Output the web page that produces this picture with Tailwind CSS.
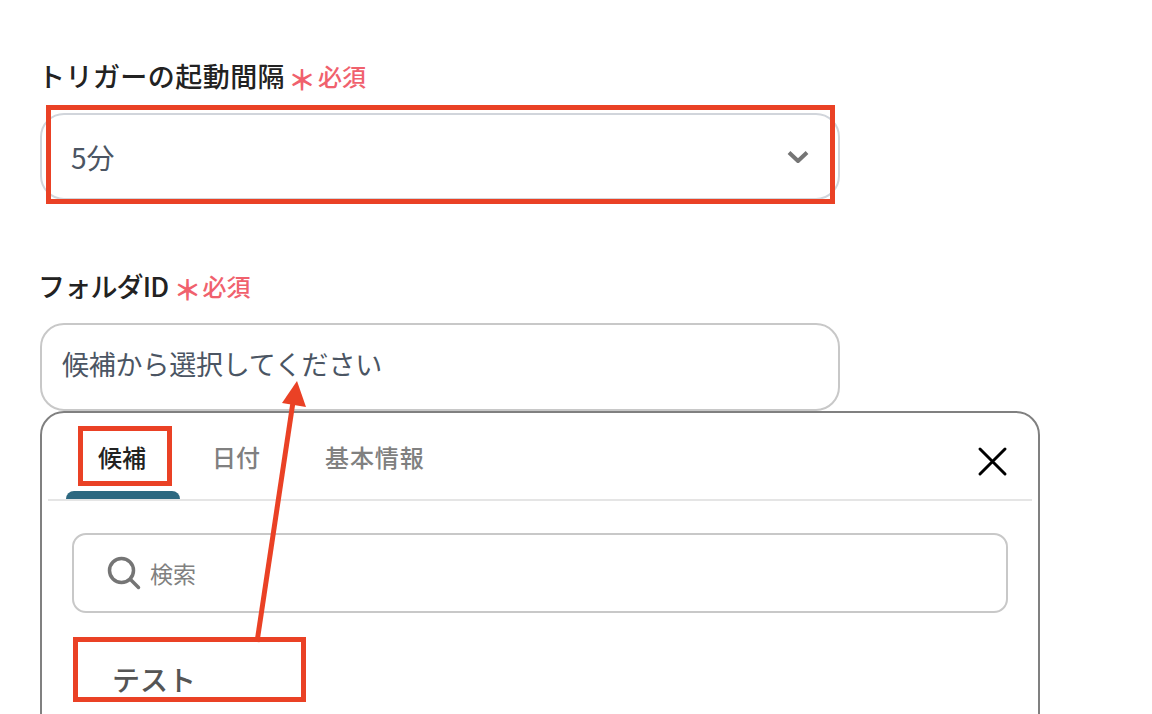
<!DOCTYPE html>
<html lang="ja">
<head>
<meta charset="utf-8">
<script src="https://cdn.jsdelivr.net/npm/@tailwindcss/browser@4"></script>
</head>
<body class="bg-white">
<div class="relative w-[1152px] h-[714px] overflow-hidden bg-white font-['Noto_Sans_CJK_JP','Noto_Sans',sans-serif]">
  <div class="pl-10 pt-[57px]">
    <div class="flex items-center h-[38px] text-[27px] font-medium text-[#222] -ml-[2px]">
      <span class="tracking-[0.45px]">トリガーの起動間隔</span>
      <span class="ml-[3px] mt-[6px] text-[#f0616d] text-[28px] font-bold">＊</span>
      <span class="ml-[2px] text-[#f0616d] text-[24px] font-medium">必須</span>
    </div>
    <div class="mt-[18px] w-[800px] h-[87px] rounded-[24px] border-2 border-[#d1d5db] flex items-center justify-between pl-[29px] pr-[28px]">
      <span class="text-[28px] text-[#4b5563]">5分</span>
      <svg class="w-[24px] h-[16px]" viewBox="0 0 24 16" fill="none"><path d="M3 3.5 L12 12 L21 3.5" stroke="#757575" stroke-width="4" stroke-linejoin="round"/></svg>
    </div>
    <div class="mt-[67px] flex items-center h-[38px] text-[27px] font-medium text-[#222] tracking-[-0.8px] -ml-[2px]">
      <span>フォルダID</span>
      <span class="ml-[5px] mt-[6px] text-[#f0616d] text-[28px] font-bold tracking-normal">＊</span>
      <span class="ml-[1px] text-[#f0616d] text-[24px] font-medium tracking-normal">必須</span>
    </div>
    <div class="mt-[18px] w-[800px] h-[88px] rounded-[24px] border-2 border-[#c8c8c8] flex items-center pl-[20px] pb-[5px]">
      <span class="text-[27px] text-[#4b5563] tracking-[-0.2px]">候補から選択してください</span>
    </div>
    <div class="w-[1000px] h-[400px] rounded-[24px] border-2 border-[#808080] px-[6px]">
      <div class="relative h-[88px] border-b-2 border-[#e5e5e5]">
        <div class="flex items-center h-[88px] text-[24px] font-medium text-[#808080]">
          <span class="ml-[50px] text-[#222]">候補</span>
          <span class="ml-[66px]">日付</span>
          <span class="ml-[65px] tracking-[0.9px]">基本情報</span>
        </div>
        <div class="absolute left-[18px] bottom-0 w-[114px] h-[8px] rounded-t-[8px] bg-[#2d6880]"></div>
        <svg class="absolute left-[928px] top-[33px] w-[32px] h-[32px]" viewBox="0 0 32 32" fill="none"><path d="M4 3 L29 28 M29 3 L4 28" stroke="#000" stroke-width="3" stroke-linecap="round"/></svg>
      </div>
      <div class="ml-[24px] mt-[32px] w-[936px] h-[80px] rounded-[14px] border-2 border-[#c8c8c8] flex items-center pl-[33px]">
        <svg class="w-[34px] h-[34px]" viewBox="0 0 34 34" fill="none"><circle cx="14.5" cy="14.5" r="12" stroke="#757575" stroke-width="3.5"/><path d="M23.5 23.5 L31.5 31.5" stroke="#757575" stroke-width="3.5" stroke-linecap="round"/></svg>
        <span class="ml-[9px] text-[23px] text-[#808080]">検索</span>
      </div>
      <div class="mt-[46px] pl-[64px] text-[28px] font-medium leading-[40px] text-[#555]">テスト</div>
    </div>
  </div>

  <div class="absolute left-[46px] top-[105px] w-[789px] h-[99px] border-[5px] border-[#ea4125]"></div>
  <div class="absolute left-[78px] top-[426px] w-[94px] h-[60px] border-[5px] border-[#ea4125]"></div>
  <div class="absolute left-[73px] top-[637px] w-[233px] h-[65px] border-[5px] border-[#ea4125]"></div>
  <svg class="absolute left-0 top-0 w-[1152px] h-[714px] pointer-events-none" viewBox="0 0 1152 714" fill="none">
    <path d="M257 642 L293 402" stroke="#ea4125" stroke-width="5"/>
    <path d="M297 381 L282 403 L306 407 Z" fill="#ea4125"/>
  </svg>
</div>
</body>
</html>
